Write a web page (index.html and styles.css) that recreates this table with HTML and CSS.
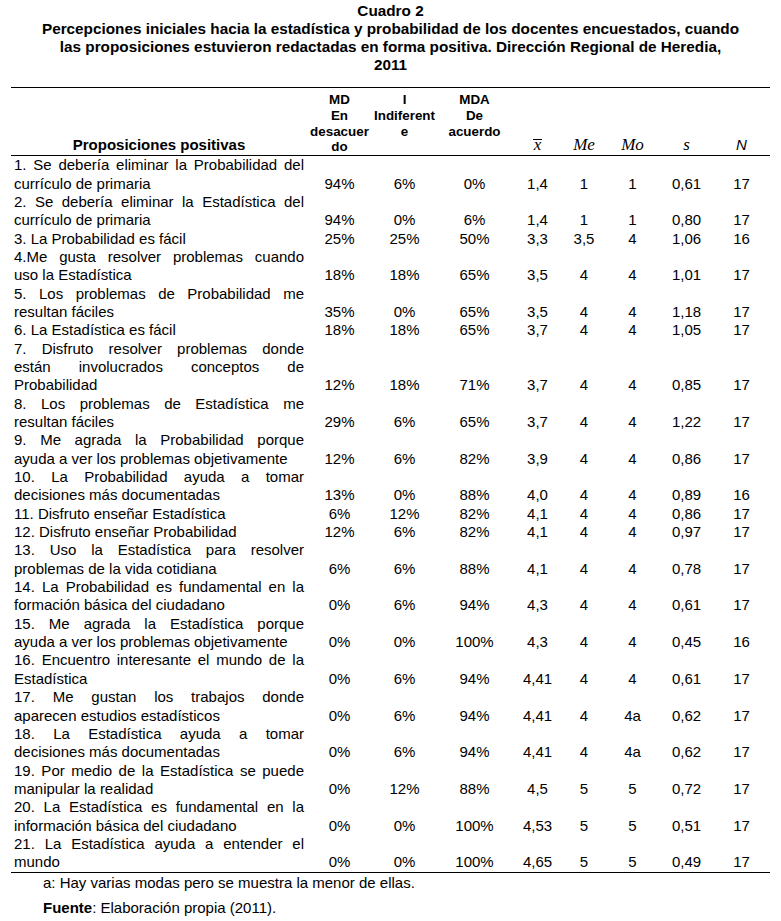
FILE: index.html
```html
<!DOCTYPE html>
<html lang="es">
<head>
<meta charset="utf-8">
<title>Cuadro 2</title>
<link rel="stylesheet" href="styles.css">
</head>
<body>
<div class="page">
  <div class="caption">
    <div class="cap-line">Cuadro 2</div>
    <div class="cap-line">Percepciones iniciales hacia la estadística y probabilidad de los docentes encuestados, cuando</div>
    <div class="cap-line">las proposiciones estuvieron redactadas en forma positiva. Dirección Regional de Heredia,</div>
    <div class="cap-line">2011</div>
  </div>

  <table class="data">
    <colgroup>
      <col class="c-prop"><col class="c-md"><col class="c-i"><col class="c-mda"><col class="c-x"><col class="c-me"><col class="c-mo"><col class="c-s"><col class="c-n">
    </colgroup>
    <thead>
      <tr>
        <th class="h-prop">Proposiciones positivas</th>
        <th class="h-top">MD<br>En<br>desacuer<br>do</th>
        <th class="h-top">I<br>Indiferent<br>e</th>
        <th class="h-top">MDA<br>De<br>acuerdo</th>
        <th class="h-sym"><span class="xbar">x</span></th>
        <th class="h-sym">Me</th>
        <th class="h-sym">Mo</th>
        <th class="h-sym">s</th>
        <th class="h-n">N</th>
      </tr>
    </thead>
    <tbody>
      <tr><td class="prop"><span class="j">1. Se debería eliminar la Probabilidad del</span><span class="l">currículo de primaria</span></td><td>94%</td><td>6%</td><td>0%</td><td>1,4</td><td>1</td><td>1</td><td>0,61</td><td>17</td></tr>
      <tr><td class="prop"><span class="j">2. Se debería eliminar la Estadística del</span><span class="l">currículo de primaria</span></td><td>94%</td><td>0%</td><td>6%</td><td>1,4</td><td>1</td><td>1</td><td>0,80</td><td>17</td></tr>
      <tr><td class="prop"><span class="l">3. La Probabilidad es fácil</span></td><td>25%</td><td>25%</td><td>50%</td><td>3,3</td><td>3,5</td><td>4</td><td>1,06</td><td>16</td></tr>
      <tr><td class="prop"><span class="j">4.Me gusta resolver problemas cuando</span><span class="l">uso la Estadística</span></td><td>18%</td><td>18%</td><td>65%</td><td>3,5</td><td>4</td><td>4</td><td>1,01</td><td>17</td></tr>
      <tr><td class="prop"><span class="j">5. Los problemas de Probabilidad me</span><span class="l">resultan fáciles</span></td><td>35%</td><td>0%</td><td>65%</td><td>3,5</td><td>4</td><td>4</td><td>1,18</td><td>17</td></tr>
      <tr><td class="prop"><span class="l">6. La Estadística es fácil</span></td><td>18%</td><td>18%</td><td>65%</td><td>3,7</td><td>4</td><td>4</td><td>1,05</td><td>17</td></tr>
      <tr><td class="prop"><span class="j">7. Disfruto resolver problemas donde</span><span class="j">están involucrados conceptos de</span><span class="l">Probabilidad</span></td><td>12%</td><td>18%</td><td>71%</td><td>3,7</td><td>4</td><td>4</td><td>0,85</td><td>17</td></tr>
      <tr><td class="prop"><span class="j">8. Los problemas de Estadística me</span><span class="l">resultan fáciles</span></td><td>29%</td><td>6%</td><td>65%</td><td>3,7</td><td>4</td><td>4</td><td>1,22</td><td>17</td></tr>
      <tr><td class="prop"><span class="j">9. Me agrada la Probabilidad porque</span><span class="l">ayuda a ver los problemas objetivamente</span></td><td>12%</td><td>6%</td><td>82%</td><td>3,9</td><td>4</td><td>4</td><td>0,86</td><td>17</td></tr>
      <tr><td class="prop"><span class="j">10. La Probabilidad ayuda a tomar</span><span class="l">decisiones más documentadas</span></td><td>13%</td><td>0%</td><td>88%</td><td>4,0</td><td>4</td><td>4</td><td>0,89</td><td>16</td></tr>
      <tr><td class="prop"><span class="l">11. Disfruto enseñar Estadística</span></td><td>6%</td><td>12%</td><td>82%</td><td>4,1</td><td>4</td><td>4</td><td>0,86</td><td>17</td></tr>
      <tr><td class="prop"><span class="l">12. Disfruto enseñar Probabilidad</span></td><td>12%</td><td>6%</td><td>82%</td><td>4,1</td><td>4</td><td>4</td><td>0,97</td><td>17</td></tr>
      <tr><td class="prop"><span class="j">13. Uso la Estadística para resolver</span><span class="l">problemas de la vida cotidiana</span></td><td>6%</td><td>6%</td><td>88%</td><td>4,1</td><td>4</td><td>4</td><td>0,78</td><td>17</td></tr>
      <tr><td class="prop"><span class="j">14. La Probabilidad es fundamental en la</span><span class="l">formación básica del ciudadano</span></td><td>0%</td><td>6%</td><td>94%</td><td>4,3</td><td>4</td><td>4</td><td>0,61</td><td>17</td></tr>
      <tr><td class="prop"><span class="j">15. Me agrada la Estadística porque</span><span class="l">ayuda a ver los problemas objetivamente</span></td><td>0%</td><td>0%</td><td>100%</td><td>4,3</td><td>4</td><td>4</td><td>0,45</td><td>16</td></tr>
      <tr><td class="prop"><span class="j">16. Encuentro interesante el mundo de la</span><span class="l">Estadística</span></td><td>0%</td><td>6%</td><td>94%</td><td>4,41</td><td>4</td><td>4</td><td>0,61</td><td>17</td></tr>
      <tr><td class="prop"><span class="j">17. Me gustan los trabajos donde</span><span class="l">aparecen estudios estadísticos</span></td><td>0%</td><td>6%</td><td>94%</td><td>4,41</td><td>4</td><td>4a</td><td>0,62</td><td>17</td></tr>
      <tr><td class="prop"><span class="j">18. La Estadística ayuda a tomar</span><span class="l">decisiones más documentadas</span></td><td>0%</td><td>6%</td><td>94%</td><td>4,41</td><td>4</td><td>4a</td><td>0,62</td><td>17</td></tr>
      <tr><td class="prop"><span class="j">19. Por medio de la Estadística se puede</span><span class="l">manipular la realidad</span></td><td>0%</td><td>12%</td><td>88%</td><td>4,5</td><td>5</td><td>5</td><td>0,72</td><td>17</td></tr>
      <tr><td class="prop"><span class="j">20. La Estadística es fundamental en la</span><span class="l">información básica del ciudadano</span></td><td>0%</td><td>0%</td><td>100%</td><td>4,53</td><td>5</td><td>5</td><td>0,51</td><td>17</td></tr>
      <tr><td class="prop"><span class="j">21. La Estadística ayuda a entender el</span><span class="l">mundo</span></td><td>0%</td><td>0%</td><td>100%</td><td>4,65</td><td>5</td><td>5</td><td>0,49</td><td>17</td></tr>
    </tbody>
  </table>

  <p class="note">a: Hay varias modas pero se muestra la menor de ellas.</p>
  <p class="source"><b>Fuente</b>: Elaboración propia (2011).</p>
</div>
</body>
</html>
```

FILE: styles.css
```css
* { box-sizing: border-box; }

body {
  margin: 0;
  background: #ffffff;
  color: #000000;
  font-family: "Liberation Sans", Arial, sans-serif;
}

.page {
  padding: 2px 11px 0 11px;
}

.caption {
  text-align: center;
  font-family: "Liberation Sans Narrow", "Liberation Sans", Arial, sans-serif;
  font-weight: bold;
  font-size: 15.3px;
  line-height: 18px;
  margin-bottom: 13px;
}

.data {
  width: 759px;
  table-layout: fixed;
  border-collapse: collapse;
  border-top: 1px solid #000;
  border-bottom: 1px solid #000;
}

.c-prop { width: 296px; }
.c-md { width: 65px; }
.c-i { width: 65px; }
.c-mda { width: 75px; }
.c-x { width: 51px; }
.c-me { width: 42px; }
.c-mo { width: 55px; }
.c-s { width: 53px; }
.c-n { width: 57px; }

.data thead tr {
  height: 67px;
}

.data th {
  padding: 0;
  border-bottom: 1px solid #000;
  text-align: center;
  font-weight: bold;
}

.data th.h-prop {
  vertical-align: bottom;
  font-size: 15px;
  line-height: 18px;
  padding: 0 0 1px;
}

.data th.h-top {
  vertical-align: top;
  font-size: 13.4px;
  line-height: 15.8px;
  padding: 4px 0 0;
}

.data th.h-sym {
  vertical-align: bottom;
  font-family: "Liberation Serif", "Times New Roman", serif;
  font-style: italic;
  font-weight: normal;
  font-size: 17px;
  line-height: 18px;
  padding: 0 0 1px;
}

.data th.h-n {
  vertical-align: bottom;
  font-style: italic;
  font-weight: normal;
  font-size: 15px;
  line-height: 18px;
  padding: 0 0 1px;
}

.xbar {
  display: inline-block;
  border-top: 1px solid #000;
  line-height: 10px;
  padding: 0 1px;
}

.data td {
  padding: 0;
  font-size: 15px;
  line-height: 18.35px;
  text-align: center;
  vertical-align: bottom;
}

.data td.prop {
  padding: 0 3px;
  text-align: left;
}

.j {
  display: block;
  text-align: justify;
  text-align-last: justify;
}

.l {
  display: block;
  text-align: left;
}

.note {
  margin: 0;
  padding-left: 32px;
  font-size: 15px;
  line-height: 20px;
}

.source {
  margin: 5px 0 0;
  padding-left: 32px;
  font-size: 15px;
  line-height: 20px;
}
```
